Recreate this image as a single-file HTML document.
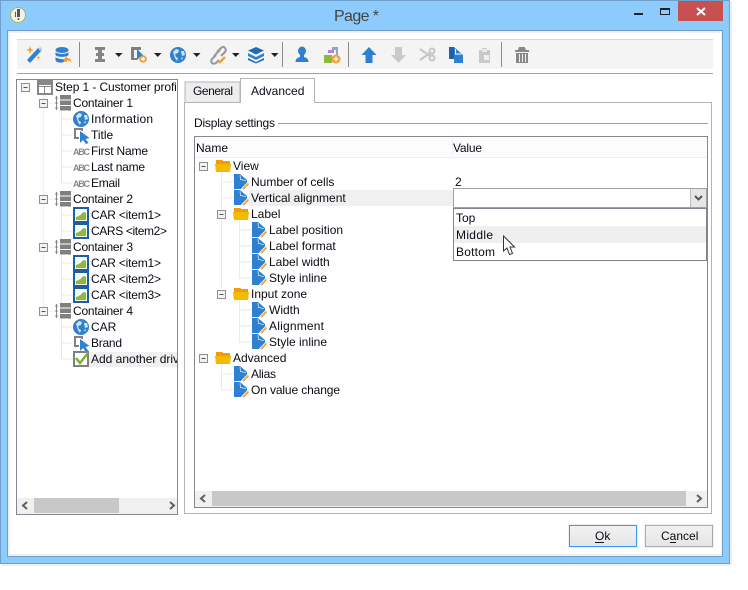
<!DOCTYPE html>
<html><head><meta charset="utf-8"><style>
html,body{margin:0;padding:0;background:#fff;width:748px;height:590px;overflow:hidden}
svg{display:block}
text{font-family:"Liberation Sans",sans-serif;font-size:12px;fill:#0a0a14}
</style></head><body>
<svg width="748" height="590" viewBox="0 0 748 590" xmlns="http://www.w3.org/2000/svg" shape-rendering="crispEdges">
<defs>
<clipPath id="lc"><rect x="17" y="80" width="160" height="418"/></clipPath>
<g id="box"><rect x="-4" y="-4" width="8" height="8" fill="#f2f2f2" stroke="#8f8f8f"/><path d="M-2 0h4" stroke="#555"/></g>
<g id="cont"><path d="M1.500 1v14M0 3h3M0 8h3M0 13h3" stroke="#888" fill="none"/><rect x="5" y="0" width="11" height="4.500" fill="#808080"/><rect x="5" y="5.500" width="11" height="4.500" fill="#808080"/><rect x="5" y="11" width="11" height="4.500" fill="#808080"/></g>
<g id="globe" shape-rendering="auto"><circle cx="8" cy="8" r="8" fill="#2f80cf"/><path d="M3 5l3-3 3 1-1 3-3 1 1 3 2 1-1 3-2-3zM11 4l3 0 1 4-3 1zM11 11l2-1-1 3z" fill="#d3e6f7"/></g>
<g id="cur" shape-rendering="auto"><path d="M1 1h9v3h-2v-1h-5v7h3v2h-5z" fill="#808080"/><path d="M7 4l0 12 3-3 3 4 2.500-1-3-4 4-1z" fill="#2f80cf"/></g>
<g id="chart"><rect x="1" y="1" width="14" height="14" fill="#f4f8f0" stroke="#1f5f9f" stroke-width="2"/><path d="M3 13v-3l3-1 1-1h1l1-2 2-1 2 1v7z" fill="#8db93e" shape-rendering="auto"/></g>
<g id="doc" shape-rendering="auto"><path d="M0 0h6l7 6v3l-6 6H0z" fill="#2f80cf"/><path d="M6 1l.5 4.500 5.500 1" fill="none" stroke="#d3e6f7" stroke-width=".8"/><path d="M8.500 15.500l6-6" stroke="#fff" stroke-width="3.400" fill="none"/><path d="M9 15l5.500-5.500" stroke="#f2a033" stroke-width="1.800" fill="none"/></g>
<g id="fold"><path d="M1 0h6l1 1h7v3H1z" fill="#f19a12"/><path d="M0 4h16l-1 8H1z" fill="#f2bb00"/></g>
<g id="tri"><path d="M0 0h7.500l-3.750 4z" fill="#222" shape-rendering="auto"/></g>
</defs>

<!-- window frame -->
<rect x="0.500" y="0.500" width="729" height="563" fill="#8ccbfb" stroke="#6f9fcb"/>
<rect x="730" y="2" width="2" height="563" fill="#eeeeee"/><rect x="2" y="564" width="729" height="2" fill="#eeeeee"/>
<rect x="7" y="30" width="716" height="527" fill="#6f9fcb"/>
<rect x="8" y="31" width="714" height="525" fill="#f0f0f0"/>
<rect x="10" y="33" width="711" height="521" fill="#fff"/>
<!-- app icon -->
<g shape-rendering="auto"><circle cx="18" cy="15" r="7.500" fill="#f2f2ea" stroke="#9cc05c"/><path d="M17 9h3v8h-3zM15 12h1v5h-1z" fill="#555"/><circle cx="18.500" cy="19" r="1" fill="#555"/></g>
<text x="334" y="21" style="font-size:16px;fill:#444" textLength="45">Page *</text>
<rect x="634" y="13" width="9" height="2" fill="#222"/>
<rect x="660.500" y="8.500" width="9" height="6" fill="none" stroke="#222"/><rect x="660" y="8" width="10" height="2" fill="#222"/>
<rect x="678" y="1" width="45" height="20" fill="#c75050"/>
<path d="M697 8l8 7M705 8l-8 7" stroke="#fff" stroke-width="2" shape-rendering="auto"/>

<!-- toolbar -->
<rect x="17" y="39" width="696" height="30" fill="#f4f4f4"/>
<rect x="17" y="39" width="696" height="1" fill="#d9d9d9"/>
<rect x="17" y="73" width="696" height="1" fill="#a0a0a0"/>
<g fill="#8a8a8a"><rect x="79" y="42" width="1" height="25"/><rect x="282" y="42" width="1" height="25"/><rect x="348" y="42" width="1" height="25"/><rect x="501" y="42" width="1" height="25"/></g>
<!-- wand -->
<g shape-rendering="auto"><path d="M27 60l11-12 4 2-12 13z" fill="#2f80cf"/><path d="M38 48l3-1 1 3-2 1z" fill="#a7d0f0"/><path d="M30 46l1 3 3 1-3 1-1 3-1-3-3-1 3-1zM38 55l1 2 2 0-2 1 0 2-1-2-2 0 2-1z" fill="#f2a033"/></g>
<!-- db -->
<g shape-rendering="auto"><ellipse cx="62" cy="50" rx="6.500" ry="3" fill="#2f80cf"/><path d="M55.500 52c2 2.500 11 2.500 13 0v3c-2 2.500-11 2.500-13 0zM55.500 57c2 2 8 2.500 9 2l1 2-3 1.500c-3 .5-7-.5-7-2.500z" fill="#2f80cf"/><path d="M63 60l4-4v2c3 0 4.500 2 4.500 5-1-2-2-2.500-4.500-2.500v2z" fill="#f2a033"/></g>
<!-- I beam -->
<path d="M95 47h10v3h-3v3h2v3h-2v3h3v3h-10v-3h3v-3h-2v-3h2v-3h-3z" fill="#858585"/>
<use href="#tri" x="115" y="53"/>
<!-- cursor with gear -->
<g shape-rendering="auto"><path d="M131 47h10v3h-7v8h3v2h-6z" fill="#808080"/><path d="M137 49l7 7-4 1-3 3z" fill="#2f80cf"/><circle cx="143" cy="59" r="2.800" fill="#fff" stroke="#f2a033" stroke-width="2"/></g>
<use href="#tri" x="154" y="53"/>
<use href="#globe" x="170" y="47"/>
<use href="#tri" x="193" y="53"/>
<!-- link -->
<g shape-rendering="auto" fill="none"><path d="M217 52l4-4c1.500-1.500 3-1.500 4 0s1 3 0 4l-4 4M216 55l-4 4c-1 1.500-1 3 0 4s3 .5 4 0l3-3M214 56l6-6" stroke="#999" stroke-width="2"/><path d="M219 63l6-6" stroke="#f2a033" stroke-width="2.500"/></g>
<use href="#tri" x="232" y="53"/>
<!-- layers -->
<g shape-rendering="auto"><path d="M256 47l8 3.500-8 4-8-4z" fill="#1f6cb5"/><path d="M248 53l8 4 8-4v3l-8 4-8-4z" fill="#2f80cf"/><path d="M248 58l8 4 8-4v2l-8 3.500-8-3.500z" fill="#1f6cb5"/></g>
<use href="#tri" x="271" y="53"/>
<!-- person -->
<g shape-rendering="auto" fill="#2f80cf"><ellipse cx="302" cy="51" rx="4" ry="4.500"/><path d="M300 55h4v2c3 1 4.500 2 4.500 5h-13c0-3 1.500-4 4.500-5z"/></g>
<!-- shapes -->
<g shape-rendering="auto"><path d="M332 47h6v9h-2v-6h-4z" fill="#8fa5d0"/><path d="M328 50h6v3h-6z" fill="#b37fd8"/><rect x="324" y="55" width="8" height="8" fill="#8db93e"/><circle cx="336" cy="59" r="4.500" fill="#f2a033"/><path d="M336 56.500v5M333.500 59h5" stroke="#fff" stroke-width="1.300"/></g>
<!-- arrows -->
<path d="M369 47l7.500 8h-4v8h-7v-8h-4z" fill="#2f80cf" shape-rendering="auto"/>
<path d="M395 47h7v8h4l-7.500 8-7.500-8h4z" fill="#cacaca" shape-rendering="auto"/>
<!-- scissors -->
<g shape-rendering="auto" fill="none" stroke="#c6c6c6" stroke-width="2"><circle cx="432" cy="51" r="2.500"/><circle cx="432" cy="58" r="2.500"/><path d="M420 49l10 7M420 60l10-7"/></g>
<!-- copy -->
<rect x="449" y="47" width="5" height="12" fill="#1f62a8"/>
<path d="M454 47l9 8v8h-9z" fill="#2f80cf" shape-rendering="auto"/>
<path d="M455.500 52v5h6" fill="none" stroke="#fff" shape-rendering="auto" transform="translate(0 -3)"/>
<!-- clipboard -->
<path d="M479 50h3v-2h5v2h3v13h-11z" fill="#c9c9c9"/><rect x="482" y="49" width="5" height="3" fill="#e9e9e9"/><rect x="484" y="55" width="5" height="5" fill="#efefef"/>
<!-- trash -->
<path d="M515 50h3l1-3h6l1 3h3v2h-14z" fill="#888"/><path d="M516 53h12v10h-12z" fill="#888"/><path d="M519.500 54v8M522.500 54v8M525.500 54v8" stroke="#eee"/>

<!-- left tree panel -->
<rect x="16.500" y="79.500" width="161" height="435" fill="#fff" stroke="#828790"/>
<g stroke="#e8e8e8" fill="none">
<path d="M61.500 111v72M61.500 207v32M61.500 255v48M61.500 319v40"/>
<path d="M62 119h11M62 135h11M62 151h11M62 167h11M62 183h11M62 215h11M62 231h11M62 263h11M62 279h11M62 295h11M62 327h11M62 343h11M62 359h11"/>
</g>
<g stroke="#f0f0f0" fill="none"><path d="M43.500 92v7M43.500 108v87M43.500 204v39M43.500 252v55M47 103h8M47 199h8M47 247h8M47 311h8"/></g>
<use href="#box" x="25.500" y="87.500"/>
<rect x="37" y="80" width="16" height="15" fill="#888"/><rect x="39" y="85" width="12" height="1" fill="#fff"/><rect x="39" y="87" width="5" height="6" fill="#fff"/><rect x="45" y="87" width="6" height="6" fill="#fff"/>
<use href="#box" x="43.500" y="103.500"/><use href="#box" x="43.500" y="199.500"/><use href="#box" x="43.500" y="247.500"/><use href="#box" x="43.500" y="311.500"/>
<use href="#cont" x="55" y="95"/><use href="#cont" x="55" y="191"/><use href="#cont" x="55" y="239"/><use href="#cont" x="55" y="303"/>
<use href="#globe" x="73" y="111"/><use href="#cur" x="73" y="127"/>
<text x="73" y="155" style="font-size:9px;font-weight:bold;fill:#8a8a8a" textLength="17">ABC</text>
<text x="73" y="171" style="font-size:9px;font-weight:bold;fill:#8a8a8a" textLength="17">ABC</text>
<text x="73" y="187" style="font-size:9px;font-weight:bold;fill:#8a8a8a" textLength="17">ABC</text>
<use href="#chart" x="73" y="207"/><use href="#chart" x="73" y="223"/><use href="#chart" x="73" y="255"/><use href="#chart" x="73" y="271"/><use href="#chart" x="73" y="287"/>
<use href="#globe" x="73" y="319"/><use href="#cur" x="73" y="335"/>
<rect x="89" y="352" width="88" height="15" fill="#f0f0f0"/>
<rect x="74" y="352" width="14" height="14" fill="#fff" stroke="#808080" stroke-width="2"/>
<path d="M76 358l4 5 8-10" stroke="#7fb02f" stroke-width="2.500" fill="none" shape-rendering="auto"/>
<g clip-path="url(#lc)">
<text x="55" y="91" letter-spacing="-0.1">Step 1 - Customer profile</text>
<text x="73" y="107" textLength="60">Container 1</text>
<text x="91" y="123" textLength="62">Information</text>
<text x="91" y="139">Title</text>
<text x="91" y="155" textLength="57">First Name</text>
<text x="91" y="171" textLength="54">Last name</text>
<text x="91" y="187" textLength="29">Email</text>
<text x="73" y="203" textLength="60">Container 2</text>
<text x="91" y="219" textLength="70">CAR &lt;item1&gt;</text>
<text x="91" y="235" textLength="76">CARS &lt;item2&gt;</text>
<text x="73" y="251" textLength="60">Container 3</text>
<text x="91" y="267" textLength="70">CAR &lt;item1&gt;</text>
<text x="91" y="283" textLength="70">CAR &lt;item2&gt;</text>
<text x="91" y="299" textLength="70">CAR &lt;item3&gt;</text>
<text x="73" y="315" textLength="60">Container 4</text>
<text x="91" y="331">CAR</text>
<text x="91" y="347" textLength="31">Brand</text>
<text x="91" y="363">Add another driver</text>
</g>
<rect x="17" y="498" width="160" height="16" fill="#f0f0f0"/>
<rect x="34" y="498" width="85" height="15" fill="#c8c8c8"/>
<path d="M27 502l-4 3.500 4 3.500M170 502l4 3.500-4 3.500" fill="none" stroke="#606060" stroke-width="2" shape-rendering="auto"/>

<!-- tabs -->
<rect x="184.500" y="102.500" width="527" height="411" fill="#fff" stroke="#b4b4b4"/>
<path d="M185 102v-20h55v20" fill="#ededed" stroke="#b4b4b4"/>
<path d="M240.500 103v-24.500h74v24.500" fill="#fff" stroke="#b4b4b4"/>
<rect x="241" y="102" width="73" height="2" fill="#fff"/>
<text x="193" y="95" textLength="40">General</text>
<text x="251" y="95">Advanced</text>
<text x="194" y="127" textLength="81">Display settings</text>
<rect x="278" y="123" width="430" height="1" fill="#a0a0a0"/>

<!-- table -->
<rect x="194.500" y="136.500" width="513" height="371" fill="#fff" stroke="#828790"/>
<rect x="195" y="137" width="512" height="20" fill="#fcfcfc"/>
<rect x="195" y="157" width="512" height="1" fill="#ebf1f8"/>
<rect x="452" y="137" width="1" height="20" fill="#ebf1f8"/>
<text x="196" y="152">Name</text>
<text x="453" y="152" textLength="29">Value</text>
<g stroke="#ebebeb" fill="none">
<path d="M221.500 172v38M221.500 219v70M239.500 219v60M239.500 299v44M221.500 363v28"/>
<path d="M222 182h12M222 198h12M240 230h12M240 246h12M240 262h12M240 278h12M240 310h12M240 326h12M240 342h12M222 374h12M222 390h12"/>
</g>
<rect x="249" y="190" width="204" height="16" fill="#f0f0f0"/>
<use href="#box" x="203.500" y="166.500"/><use href="#box" x="221.500" y="214.500"/><use href="#box" x="221.500" y="294.500"/><use href="#box" x="203.500" y="358.500"/>
<use href="#fold" x="215" y="160"/><use href="#fold" x="233" y="208"/><use href="#fold" x="233" y="288"/><use href="#fold" x="215" y="352"/>
<use href="#doc" x="234" y="174"/><use href="#doc" x="234" y="190"/>
<use href="#doc" x="252" y="222"/><use href="#doc" x="252" y="238"/><use href="#doc" x="252" y="254"/><use href="#doc" x="252" y="270"/>
<use href="#doc" x="252" y="302"/><use href="#doc" x="252" y="318"/><use href="#doc" x="252" y="334"/>
<use href="#doc" x="234" y="366"/><use href="#doc" x="234" y="382"/>
<text x="233" y="170">View</text>
<text x="251" y="186">Number of cells</text>
<text x="251" y="202">Vertical alignment</text>
<text x="251" y="218">Label</text>
<text x="269" y="234">Label position</text>
<text x="269" y="250">Label format</text>
<text x="269" y="266">Label width</text>
<text x="269" y="282">Style inline</text>
<text x="251" y="298">Input zone</text>
<text x="269" y="314">Width</text>
<text x="269" y="330" textLength="55">Alignment</text>
<text x="269" y="346">Style inline</text>
<text x="233" y="362">Advanced</text>
<text x="251" y="378" textLength="25">Alias</text>
<text x="251" y="394" textLength="89">On value change</text>
<text x="455" y="186">2</text>

<!-- combobox -->
<rect x="453.500" y="188.500" width="253" height="19" fill="#fff" stroke="#a0a0a0"/>
<rect x="690" y="189" width="16" height="18" fill="#e6e6e6"/><rect x="690" y="189" width="1" height="18" fill="#bdbdbd"/>
<path d="M695 196l3.500 3.500 3.500-3.500" fill="none" stroke="#555" stroke-width="2" shape-rendering="auto"/>
<rect x="453.500" y="208.500" width="253" height="52" fill="#fff" stroke="#7f858c"/>
<rect x="454" y="226" width="252" height="17" fill="#efefef"/>
<text x="456" y="222">Top</text>
<text x="456" y="239" textLength="37">Middle</text>
<text x="456" y="256" textLength="39">Bottom</text>
<path d="M503.500 236v15l3.500-3 2.500 6.500 3-1-2.500-6.500 4.500 0z" fill="#fff" stroke="#333" shape-rendering="auto"/>

<!-- table scrollbar -->
<rect x="195" y="491" width="512" height="16" fill="#f0f0f0"/>
<rect x="212" y="491" width="474" height="15" fill="#c8c8c8"/>
<path d="M205 495l-4 3.500 4 3.500M697 495l4 3.500-4 3.500" fill="none" stroke="#606060" stroke-width="2" shape-rendering="auto"/>

<!-- buttons -->
<defs><linearGradient id="bg" x1="0" y1="0" x2="0" y2="1"><stop offset="0" stop-color="#f2f2f2"/><stop offset="1" stop-color="#e5e5e5"/></linearGradient></defs>
<rect x="568" y="524" width="70" height="24" fill="#f0f0f0"/>
<rect x="644" y="524" width="70" height="24" fill="#f0f0f0"/>
<rect x="569.500" y="525.500" width="67" height="21" fill="url(#bg)" stroke="#3399ff"/>
<rect x="645.500" y="525.500" width="67" height="21" fill="url(#bg)" stroke="#acacac"/>
<text x="595" y="540">Ok</text><rect x="595" y="542" width="9" height="1" fill="#14141e"/>
<text x="661" y="540">Cancel</text><rect x="670" y="542" width="6" height="1" fill="#14141e"/>
</svg>
</body></html>
